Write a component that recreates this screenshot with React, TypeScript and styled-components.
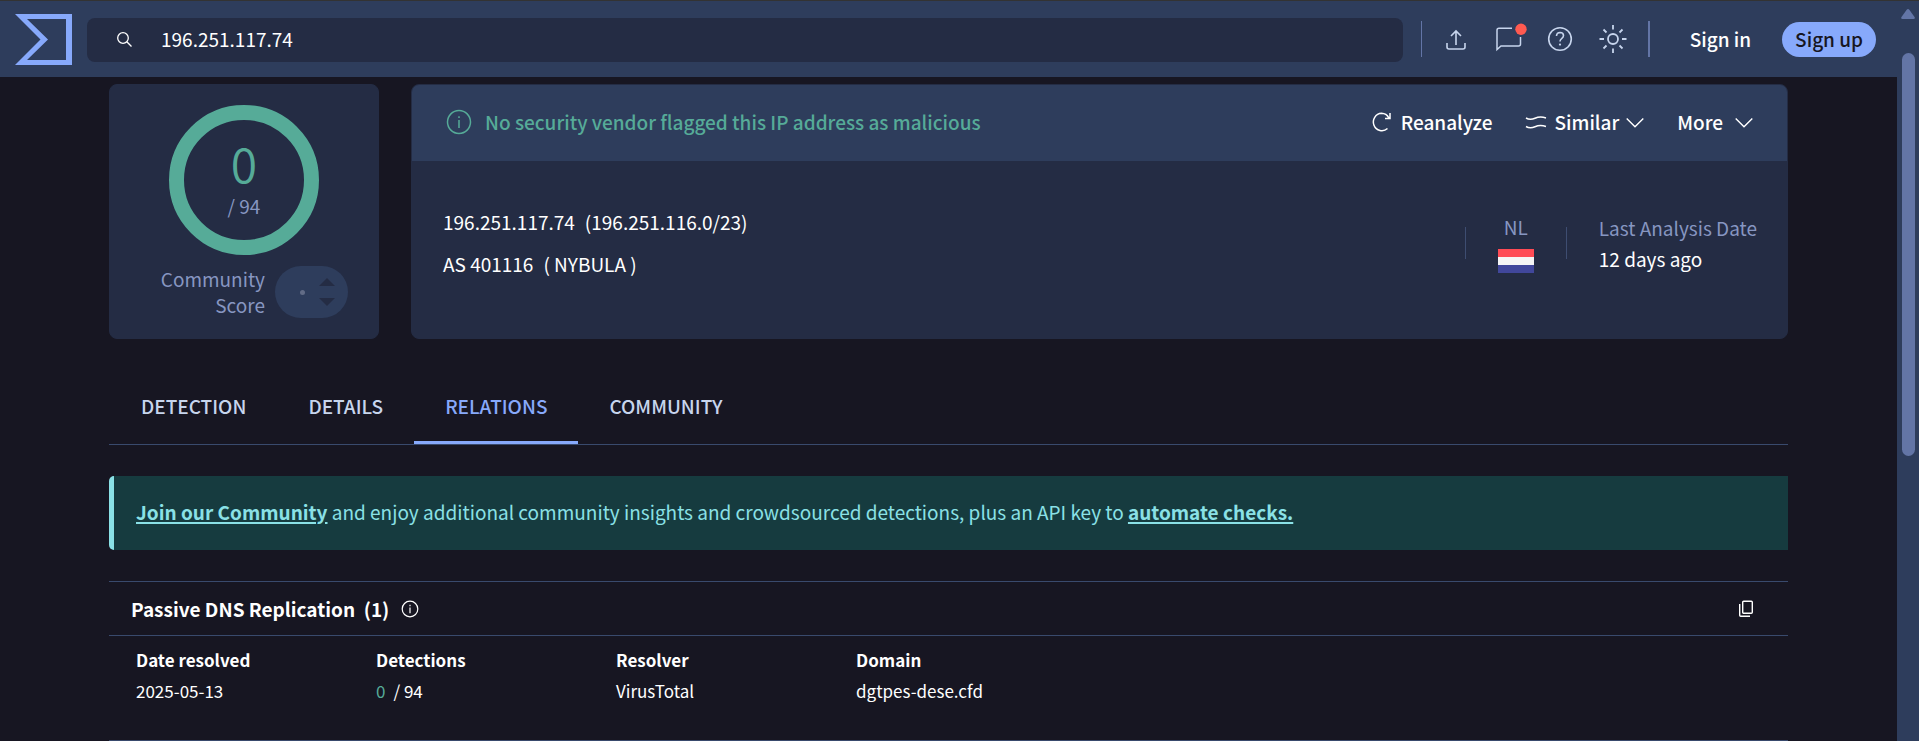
import React from 'react';
import styled, { createGlobalStyle } from 'styled-components';

const color = {
  page: '#171622',
  panel: '#242c44',
  raised: '#2e3d5c',
  line: '#394a6d',
  muted: '#8796c1',
  soft: '#c7d5ed',
  accent: '#87a9fb',
  green: '#56ab98',
  teal: '#8ae1e6',
  scroll: '#6375a6',
};

const GlobalStyle = createGlobalStyle`
  *, *::before, *::after { box-sizing: border-box; }
  body {
    margin: 0;
    background: ${color.page};
    color: #fff;
    font-family: "Noto Sans CJK SC", "Noto Sans", sans-serif;
    font-size: 19px;
    line-height: 26px;
  }
  button, input { font: inherit; color: inherit; }
  svg { display: block; flex: none; }
`;

const Shell = styled.div`
  display: grid;
  grid-template-columns: minmax(0, 1fr) 22px;
  height: 100vh;
  overflow: hidden;
  border-top: 1px solid #333;
`;

const Page = styled.div`
  display: flex;
  flex-direction: column;
  min-width: 0;
  overflow: hidden;
`;

const Scrollbar = styled.div`
  display: flex;
  flex-direction: column;
  align-items: center;
  gap: 34px;
  padding-top: 8px;
  background: ${color.raised};
`;

const Thumb = styled.div`
  width: 13px;
  height: 403px;
  border-radius: 7px;
  background: ${color.scroll};
`;

const TopBar = styled.header`
  display: flex;
  align-items: center;
  flex: none;
  height: 76px;
  padding: 0 21px 0 15px;
  background: ${color.raised};
`;

const SearchBox = styled.form`
  display: flex;
  flex: 1;
  align-items: center;
  gap: 28px;
  height: 44px;
  margin: 2px 18px 0 15px;
  padding: 0 0 2px 29px;
  border-radius: 8px;
  background: ${color.panel};
`;

const SearchInput = styled.input`
  flex: 1;
  min-width: 0;
  padding: 0;
  border: 0;
  outline: 0;
  background: transparent;
`;

const Divider = styled.span<{ $width: number; $tone: string; $height: number }>`
  flex: none;
  width: ${p => p.$width}px;
  height: ${p => p.$height}px;
  background: ${p => p.$tone};
`;

const Tools = styled.nav`
  display: flex;
  align-items: center;
  gap: 24px;
  padding: 0 19px 0 21px;
`;

const IconButton = styled.button`
  display: flex;
  padding: 0;
  border: 0;
  background: none;
  color: ${color.soft};
  cursor: pointer;
`;

const SignIn = styled.a`
  margin: 0 31px 0 40px;
  color: #fff;
  font-weight: 500;
  text-decoration: none;
`;

const SignUp = styled.a`
  display: flex;
  align-items: center;
  height: 35px;
  padding: 0 13px;
  border-radius: 18px;
  background: ${color.accent};
  color: ${color.page};
  font-weight: 500;
  text-decoration: none;
`;

const Content = styled.main`
  padding: 7px 109px 0;
`;

const Summary = styled.section`
  display: grid;
  grid-template-columns: 270px minmax(0, 1fr);
  gap: 32px;
  height: 255px;
`;

const Card = styled.div`
  overflow: hidden;
  border: 1px solid ${color.panel};
  border-radius: 8px;
  background: ${color.panel};
`;

const ScoreCard = styled(Card)`
  display: flex;
  flex-direction: column;
  align-items: center;
  gap: 11px;
  padding-top: 20px;
`;

const Ring = styled.div`
  display: flex;
  flex-direction: column;
  align-items: center;
  gap: 5px;
  width: 150px;
  height: 150px;
  padding-top: 16px;
  border: 15px solid ${color.green};
  border-radius: 50%;
`;

const RingValue = styled.span`
  color: ${color.green};
  font-size: 48px;
  font-weight: 350;
  line-height: 52px;
`;

const RingTotal = styled.span`
  color: ${color.muted};
`;

const Community = styled.div`
  display: flex;
  align-items: center;
  gap: 10px;
  padding-left: 19px;
  color: ${color.muted};
  text-align: right;
`;

const CommunityLabel = styled.span`
  width: 106px;
`;

const Votes = styled.span`
  display: flex;
  align-items: center;
  justify-content: flex-end;
  gap: 14px;
  width: 73px;
  height: 52px;
  padding-right: 13px;
  border-radius: 26px;
  background: ${color.raised};
`;

const VoteDot = styled.span`
  width: 5px;
  height: 5px;
  border-radius: 50%;
  background: #626c86;
`;

const Verdict = styled.div`
  display: flex;
  align-items: center;
  height: 76px;
  padding: 0 34px 2px;
  background: ${color.raised};
`;

const VerdictText = styled.h1`
  flex: 1;
  margin: 0 0 0 13px;
  color: ${color.green};
  font-size: 19px;
  font-weight: 500;
`;

const ActionButton = styled.button<{ $gap: number }>`
  display: flex;
  align-items: center;
  gap: ${p => p.$gap}px;
  margin-left: 33px;
  padding: 0;
  border: 0;
  background: none;
  font-weight: 500;
  white-space: nowrap;
  cursor: pointer;
`;

const Facts = styled.div`
  display: flex;
  align-items: center;
  height: 177px;
  padding: 0 30px 13px 31px;
`;

const Address = styled.div`
  display: flex;
  flex: 1;
  flex-direction: column;
  gap: 16px;
`;

const AddressLine = styled.div`
  display: flex;
  gap: 10px;
`;

const Country = styled.div`
  display: flex;
  flex-direction: column;
  align-items: center;
  gap: 9px;
  margin: 0 32px;
  color: ${color.muted};
`;

const Flag = styled.svg`
  width: 36px;
  height: 24px;
`;

const Analysis = styled.div`
  display: flex;
  flex-direction: column;
  gap: 5px;
  margin-left: 32px;
`;

const FactLabel = styled.span`
  color: ${color.muted};
`;

const Tabs = styled.nav`
  display: flex;
  height: 74px;
  margin: 32px 0 31px;
  padding-left: 1px;
  border-bottom: 1px solid ${color.line};
`;

const Tab = styled.a<{ $active?: boolean }>`
  display: flex;
  align-items: center;
  padding: 0 31px;
  border-bottom: 3px solid ${p => (p.$active ? color.accent : 'transparent')};
  color: ${p => (p.$active ? color.accent : color.soft)};
  font-weight: 500;
  text-decoration: none;
`;

const Banner = styled.p`
  height: 74px;
  margin: 0 0 31px;
  padding: 23px 22px;
  border-left: 5px solid ${color.teal};
  border-radius: 5px 0 0 5px;
  background: #163b3f;
  color: ${color.teal};
`;

const BannerLink = styled.a`
  color: inherit;
  font-weight: 700;
  text-decoration-thickness: 2px;
  text-underline-offset: 2px;
`;

const Section = styled.section`
  border-top: 1px solid ${color.line};
  border-bottom: 1px solid ${color.line};
`;

const SectionHead = styled.div`
  display: flex;
  align-items: center;
  gap: 12px;
  height: 54px;
  padding: 0 34px 0 22px;
  border-bottom: 1px solid ${color.line};
`;

const SectionTitle = styled.h2`
  margin: 0;
  font-size: 19px;
  font-weight: 700;
  white-space: pre;
`;

const Spacer = styled.span`
  flex: 1;
`;

const Table = styled.table`
  width: 100%;
  height: 104px;
  padding: 11px 0 31px 25px;
  border-spacing: 0;
  table-layout: fixed;
  font-size: 17px;
  text-align: left;
`;

const HeadCell = styled.th<{ $width?: string }>`
  width: ${p => p.$width ?? 'auto'};
  padding: 0 2px;
  font-weight: 700;
`;

const Cell = styled.td`
  padding: 0 2px;
`;

const Clean = styled.span`
  margin-right: 8px;
  color: ${color.green};
`;

const Chevron = () => (
  <svg width="18" height="20" viewBox="0 0 18 20" fill="none" stroke="currentColor" strokeWidth="1.4">
    <path d="M.7 6.5 9 14.8l8.3-8.3" />
  </svg>
);

export default function App() {
  return (
    <>
      <GlobalStyle />
      <Shell>
        <Page>
          <TopBar>
            <svg width="57" height="51" viewBox="0 0 57 51" fill={color.accent} fillRule="evenodd">
              <path d="M0 0h57v51H0l25.5-25.5zM12 5l21 20.500L12 46h39V5z" />
            </svg>
            <SearchBox role="search">
              <svg width="17" height="17" viewBox="0 0 17 17" fill="none" stroke="#fff" strokeWidth="1.3">
                <circle cx="7" cy="7" r="5.3" />
                <path d="m10.8 10.8 4.7 4.7" />
              </svg>
              <SearchInput aria-label="Search" defaultValue="196.251.117.74" />
            </SearchBox>
            <Divider $width={1} $height={36} $tone={color.scroll} />
            <Tools aria-label="Tools">
              <IconButton aria-label="Upload">
                <svg width="26" height="30" viewBox="0 0 26 30" fill="none" stroke="currentColor" strokeWidth="1.6">
                  <path d="M13 21V7M8 12l5-5 5 5M4 19v4q0 2 2 2h14q2 0 2-2v-4" />
                </svg>
              </IconButton>
              <IconButton aria-label="Notifications">
                <svg
                  width="30"
                  height="30"
                  viewBox="0 0 30 30"
                  fill="none"
                  stroke="currentColor"
                  strokeWidth="1.5"
                  overflow="visible"
                >
                  <path d="M19 4.200H6q-2 0-2 2V25.500l4-3.500h17.500q2 0 2-2V13" />
                  <circle cx="28" cy="5.200" r="5.700" fill="#ff5a50" stroke="none" />
                </svg>
              </IconButton>
              <IconButton aria-label="Help">
                <svg width="26" height="26" viewBox="0 0 26 26" fill="none" stroke="currentColor" strokeWidth="1.6">
                  <circle cx="13" cy="13" r="11.3" />
                  <path d="M9.500 10q.2-3.500 3.600-3.500 3.400.1 3.400 3 0 1.700-1.900 3.100-1.600 1.200-1.600 3" />
                  <circle cx="13" cy="18.600" r="1.100" fill="currentColor" stroke="none" />
                </svg>
              </IconButton>
              <IconButton aria-label="Theme">
                <svg width="32" height="30" viewBox="-1 0 32 30" fill="none" stroke="currentColor" strokeWidth="1.8">
                  <circle cx="15" cy="15" r="5" />
                  <path d="M15 1v4.500M15 24.500V29M1.500 15H6M24 15h4.500M5.500 5.500l3 3M21.500 21.500l3 3M5.500 24.500l3-3M21.500 8.500l3-3" />
                </svg>
              </IconButton>
            </Tools>
            <Divider $width={2} $height={36} $tone={color.scroll} />
            <SignIn href="#sign-in">Sign in</SignIn>
            <SignUp href="#sign-up">Sign up</SignUp>
          </TopBar>

          <Content>
            <Summary>
              <ScoreCard>
                <Ring>
                  <RingValue>0</RingValue>
                  <RingTotal>/ 94</RingTotal>
                </Ring>
                <Community>
                  <CommunityLabel>Community Score</CommunityLabel>
                  <Votes>
                    <VoteDot />
                    <svg width="16" height="30" viewBox="0 0 16 30" fill={color.panel}>
                      <path d="M0 9l8-8 8 8zM0 21h16l-8 8z" />
                    </svg>
                  </Votes>
                </Community>
              </ScoreCard>

              <Card>
                <Verdict>
                  <svg width="26" height="26" viewBox="0 0 26 26" fill="none" stroke={color.green} strokeWidth="1.5">
                    <circle cx="13" cy="13" r="11.5" />
                    <path d="M13 11v8M13 7.200v1.800" />
                  </svg>
                  <VerdictText>No security vendor flagged this IP address as malicious</VerdictText>
                  <ActionButton $gap={10}>
                    <svg width="20" height="22" viewBox="0 0 20 22" fill="none" stroke="currentColor" strokeWidth="1.5">
                      <path d="M17.800 6.800Q15.500 2.500 10.500 2.300A8.500 8.700 0 1 0 16.500 17.500M19 2v5.500h-5" />
                    </svg>
                    Reanalyze
                  </ActionButton>
                  <ActionButton $gap={7}>
                    <svg width="22" height="16" viewBox="0 0 22 16" fill="none" stroke="currentColor" strokeWidth="1.5">
                      <path d="M1 4q4 2.500 9 .3T21 4M1 12.500q4 2.500 9 .3T21 12.500" />
                    </svg>
                    Similar
                    <Chevron />
                  </ActionButton>
                  <ActionButton $gap={12}>
                    More
                    <Chevron />
                  </ActionButton>
                </Verdict>
                <Facts>
                  <Address>
                    <AddressLine><span>196.251.117.74</span><span>(196.251.116.0/23)</span></AddressLine>
                    <AddressLine><span>AS 401116</span><span>( NYBULA )</span></AddressLine>
                  </Address>
                  <Divider $width={1} $height={32} $tone="#3e4d71" />
                  <Country>
                    NL
                    <Flag viewBox="0 0 36 24" role="img" aria-label="Netherlands">
                      <path fill="#ff4b55" d="M0 0h36v8H0z" />
                      <path fill="#f5f5f5" d="M0 8h36v8H0z" />
                      <path fill="#41479b" d="M0 16h36v8H0z" />
                    </Flag>
                  </Country>
                  <Divider $width={1} $height={32} $tone="#3e4d71" />
                  <Analysis>
                    <FactLabel>Last Analysis Date</FactLabel>
                    <span>12 days ago</span>
                  </Analysis>
                </Facts>
              </Card>
            </Summary>

            <Tabs aria-label="Report">
              <Tab href="#detection">DETECTION</Tab>
              <Tab href="#details">DETAILS</Tab>
              <Tab href="#relations" $active aria-current="page">RELATIONS</Tab>
              <Tab href="#community">COMMUNITY</Tab>
            </Tabs>

            <Banner>
              <BannerLink href="#join">Join our Community</BannerLink> and enjoy additional community insights and
              crowdsourced detections, plus an API key to <BannerLink href="#api">automate checks.</BannerLink>
            </Banner>

            <Section>
              <SectionHead>
                <SectionTitle>Passive DNS Replication  (1)</SectionTitle>
                <svg width="18" height="18" viewBox="0 0 18 18" fill="none" stroke="#fff" strokeWidth="1.2">
                  <circle cx="9" cy="9" r="7.8" />
                  <path d="M9 7.600v5.600M9 4.800v1.400" />
                </svg>
                <Spacer />
                <IconButton aria-label="Copy">
                  <svg width="16" height="18" viewBox="0 0 16 18" fill="none" stroke="#fff" strokeWidth="1.4">
                    <rect x="4.7" y="1.2" width="9.6" height="12" rx="1" />
                    <path d="M1.700 4v11.300q0 1 1 1H12" />
                  </svg>
                </IconButton>
              </SectionHead>
              <Table>
                <thead>
                  <tr>
                    <HeadCell scope="col" $width="240px">Date resolved</HeadCell>
                    <HeadCell scope="col" $width="240px">Detections</HeadCell>
                    <HeadCell scope="col" $width="240px">Resolver</HeadCell>
                    <HeadCell scope="col">Domain</HeadCell>
                  </tr>
                </thead>
                <tbody>
                  <tr>
                    <Cell>2025-05-13</Cell>
                    <Cell><Clean>0</Clean>/ 94</Cell>
                    <Cell>VirusTotal</Cell>
                    <Cell>dgtpes-dese.cfd</Cell>
                  </tr>
                </tbody>
              </Table>
            </Section>
          </Content>
        </Page>
        <Scrollbar aria-hidden="true">
          <svg width="14" height="10" viewBox="0 0 14 10" fill={color.scroll}>
            <path d="M5.500 1q1.500-2 3 0l5 7q1 2-1 2h-11q-2 0-1-2z" />
          </svg>
          <Thumb />
        </Scrollbar>
      </Shell>
    </>
  );
}
